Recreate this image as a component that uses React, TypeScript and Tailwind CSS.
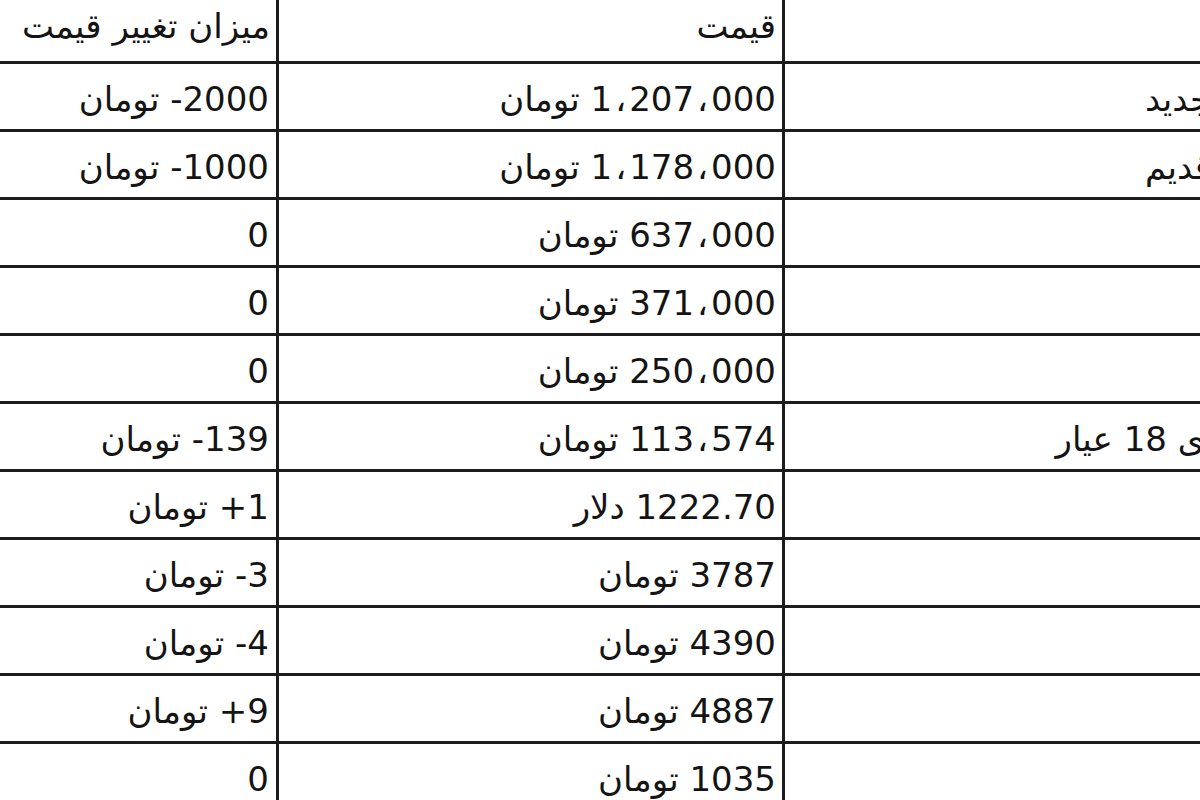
import React from "react";

type Row = { name: string; price: string; change: string };

const rows: Row[] = [
  { name: "سکه طرح جدید", price: "1،207،000 تومان", change: "2000- تومان" },
  { name: "سکه طرح قدیم", price: "1،178،000 تومان", change: "1000- تومان" },
  { name: "نیم سکه", price: "637،000 تومان", change: "0" },
  { name: "ربع سکه", price: "371،000 تومان", change: "0" },
  { name: "سکه گرمی", price: "250،000 تومان", change: "0" },
  { name: "هر گرم طلای 18 عیار", price: "113،574 تومان", change: "139- تومان" },
  { name: "انس طلا", price: "1222.70 دلار", change: "1+ تومان" },
  { name: "دلار", price: "3787 تومان", change: "3- تومان" },
  { name: "یورو", price: "4390 تومان", change: "4- تومان" },
  { name: "پوند", price: "4887 تومان", change: "9+ تومان" },
  { name: "درهم", price: "1035 تومان", change: "0" },
];

const cell =
  "h-[68px] border-b-[3px] border-l-[3px] border-[#1c1c1c] flex items-center justify-start whitespace-nowrap overflow-hidden";

function Price({ text }: { text: string }) {
  const parts = text.split("،");
  return (
    <>
      {parts.map((p, i) => (
        <React.Fragment key={i}>
          {i > 0 && <span className="mx-[3px]">،</span>}
          {p}
        </React.Fragment>
      ))}
    </>
  );
}

export default function App() {
  return (
    <div
      className="w-[1200px] h-[800px] overflow-hidden bg-white text-[#141414]"
      style={{ fontFamily: '"DejaVu Sans", Tahoma, sans-serif' }}
    >
      <div
        dir="rtl"
        className="w-[1417px] -ml-[43px] -mt-[7px] border-t-[3px] border-[#1c1c1c] grid grid-cols-[592px_506px_319px] text-[34px] leading-none"
      >
        <div className={`${cell} pr-[8px]`}>
          <span className="pb-[6px]">عنوان</span>
        </div>
        <div className={`${cell} pr-[6px]`}>
          <span className="pb-[6px]">قیمت</span>
        </div>
        <div className={`${cell} pr-[6px] border-l-0`}>
          <span className="pb-[6px]">میزان تغییر قیمت</span>
        </div>
        {rows.map((r, i) => (
          <React.Fragment key={i}>
            <div className={`${cell} pr-[8px]`}>
              <span className="pt-[4px]">{r.name}</span>
            </div>
            <div className={`${cell} pr-[6px]`}>
              <span className="pt-[4px]">
                <Price text={r.price} />
              </span>
            </div>
            <div className={`${cell} pr-[7px] border-l-0`}>
              <span className="pt-[4px]">{r.change}</span>
            </div>
          </React.Fragment>
        ))}
      </div>
    </div>
  );
}
